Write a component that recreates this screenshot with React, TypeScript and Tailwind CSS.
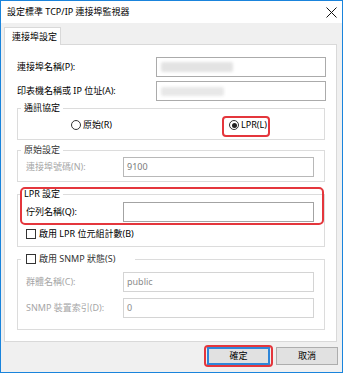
import React from "react";

const FONT = '"Noto Sans","Noto Sans CJK TC",sans-serif';

function Radio({ checked, label }: { checked?: boolean; label: string }) {
  return (
    <span className="flex items-center h-[14px] gap-[2px]">
      <span className="w-[10px] h-[10px] rounded-full border border-[#333] bg-white flex items-center justify-center">
        {checked && <span className="w-[5px] h-[5px] rounded-full bg-[#222]" />}
      </span>
      <span className="text-[9px] leading-[12px] text-black">{label}</span>
    </span>
  );
}

function Check({ label, muted }: { label: string; muted?: boolean }) {
  return (
    <span className="flex items-center h-[14px] gap-[3px]">
      <span className="w-[10px] h-[10px] border border-[#333] bg-white" />
      <span className={`text-[9px] leading-[12px] ${muted ? "text-[#333]" : "text-black"}`}>{label}</span>
    </span>
  );
}

function Field({
  w,
  value,
  border,
  textColor,
  children,
}: {
  w: string;
  value?: string;
  border: string;
  textColor?: string;
  children?: React.ReactNode;
}) {
  return (
    <div className={`${w} h-[20px] bg-white border ${border} flex items-center pl-[3px]`}>
      {value && <span className={`text-[9px] leading-[12px] ${textColor ?? "text-black"}`}>{value}</span>}
      {children}
    </div>
  );
}

export default function App() {
  return (
    <div
      className="w-[343px] h-[373px] bg-[#f0f0f0] border border-[#1a84dc] flex flex-col overflow-hidden"
      style={{ fontFamily: FONT }}
    >
      {/* Title bar */}
      <div className="h-[22px] bg-white flex items-center justify-between pl-[6px] pr-[5px] shrink-0">
        <span className="text-[9px] leading-[12px] text-black">設定標準 TCP/IP 連接埠監視器</span>
        <svg width="11" height="11" viewBox="0 0 11 11" className="block">
          <path d="M0.5 0.5 L10.5 10.5 M10.5 0.5 L0.5 10.5" stroke="#111" strokeWidth="1" fill="none" />
        </svg>
      </div>

      {/* Tab */}
      <div className="pl-[3px] mt-[4px] shrink-0">
        <div className="relative z-10 -mb-[1px] w-[57px] h-[18px] bg-white border border-b-0 border-[#d9d9d9] flex items-center pl-[7px]">
          <span className="text-[9px] leading-[12px] text-black">連接埠設定</span>
        </div>
      </div>

      {/* Panel */}
      <div className="ml-[3px] w-[333px] bg-white border border-[#d9d9d9] pl-[12px] pr-[10px] pt-[12px] pb-[11px] flex flex-col shrink-0">
        <div className="flex items-center h-[20px]">
          <span className="w-[139px] text-[9px] leading-[12px] text-black">連接埠名稱(P):</span>
          <Field w="w-[170px]" border="border-[#ababab]">
            <span className="ml-[1px] w-[72px] h-[10px] bg-[#e3e3e3] blur-[1.5px] rounded-[2px]" />
          </Field>
        </div>
        <div className="flex items-center h-[20px] mt-[4px]">
          <span className="w-[139px] text-[9px] leading-[12px] text-black">印表機名稱或 IP 位址(A):</span>
          <Field w="w-[170px]" border="border-[#ababab]">
            <span className="ml-[1px] w-[63px] h-[9px] bg-[#e8e8e8] blur-[1.5px] rounded-[2px]" />
          </Field>
        </div>

        {/* 通訊協定 */}
        <fieldset className="mt-[1px] w-[308px] border border-[#dcdcdc] px-[3px] pt-[4px] pb-[7px]">
          <legend className="px-[3px] text-[9px] leading-[12px] text-black">通訊協定</legend>
          <div className="flex items-center pl-[50px]">
            <span className="w-[158px]">
              <Radio label="原始(R)" />
            </span>
            <span className="relative">
              <Radio checked label="LPR(L)" />
              <span className="absolute left-[-7px] right-[-3px] top-[-2px] bottom-[-5px] border-2 border-[#e4363c] rounded-[4px]" />
            </span>
          </div>
        </fieldset>

        {/* 原始設定 */}
        <fieldset className="mt-[4px] w-[308px] border border-[#dcdcdc] px-[3px] pt-[1px] pb-[4px]">
          <legend className="px-[3px] text-[9px] leading-[12px] text-[#333]">原始設定</legend>
          <div className="flex items-center h-[20px] pl-[5px]">
            <span className="w-[97px] text-[9px] leading-[12px] text-[#a6a6a6]">連接埠號碼(N):</span>
            <Field w="w-[191px]" value="9100" border="border-[#b8b8b8]" textColor="text-[#7a7a7a]" />
          </div>
        </fieldset>

        {/* LPR 設定 */}
        <div className="relative mt-[6px]">
          <fieldset className="w-[308px] border border-[#dcdcdc] px-[3px] pt-[2px] pb-[5px]">
            <legend className="px-[3px] text-[9px] leading-[12px] text-black">LPR 設定</legend>
            <div className="flex items-center h-[20px] pl-[5px]">
              <span className="w-[97px] text-[9px] leading-[12px] text-black">佇列名稱(Q):</span>
              <Field w="w-[191px]" border="border-[#a3a3a3]" />
            </div>
            <div className="mt-[5px] pl-[5px]">
              <Check label="啟用 LPR 位元組計數(B)" />
            </div>
          </fieldset>
          <span className="absolute left-[3px] top-[-1px] w-[304px] h-[38px] border-2 border-[#e4363c] rounded-[5px]" />
        </div>

        {/* SNMP */}
        <fieldset className="mt-[5px] w-[308px] border border-[#dcdcdc] px-[3px] pt-[6px] pb-[11px]">
          <legend className="pl-[5px] pr-[20px]">
            <Check label="啟用 SNMP 狀態(S)" muted />
          </legend>
          <div className="flex items-center h-[20px] pl-[5px]">
            <span className="w-[97px] text-[9px] leading-[12px] text-[#a6a6a6]">群體名稱(C):</span>
            <Field w="w-[191px]" value="public" border="border-[#d4d4d4]" textColor="text-[#8c8c8c]" />
          </div>
          <div className="flex items-center h-[20px] mt-[6px] pl-[5px]">
            <span className="w-[97px] text-[9px] leading-[12px] text-[#a6a6a6]">SNMP 裝置索引(D):</span>
            <Field w="w-[191px]" value="0" border="border-[#d4d4d4]" textColor="text-[#8c8c8c]" />
          </div>
        </fieldset>
      </div>

      {/* Buttons */}
      <div className="mt-[5px] flex justify-end pr-[4px] gap-[6px] shrink-0">
        <div className="relative">
          <button className="w-[63px] h-[18px] bg-[#e1e1e1] border-2 border-[#2f86d8] flex items-center justify-center text-[9px] leading-[12px] text-black">
            確定
          </button>
          <span className="absolute left-[-3px] right-[-3px] top-[-2px] bottom-[-2px] border-2 border-[#e4363c] rounded-[4px]" />
        </div>
        <button className="w-[62px] h-[18px] bg-[#e1e1e1] border border-[#adadad] flex items-center justify-center text-[9px] leading-[12px] text-black">
          取消
        </button>
      </div>
    </div>
  );
}
